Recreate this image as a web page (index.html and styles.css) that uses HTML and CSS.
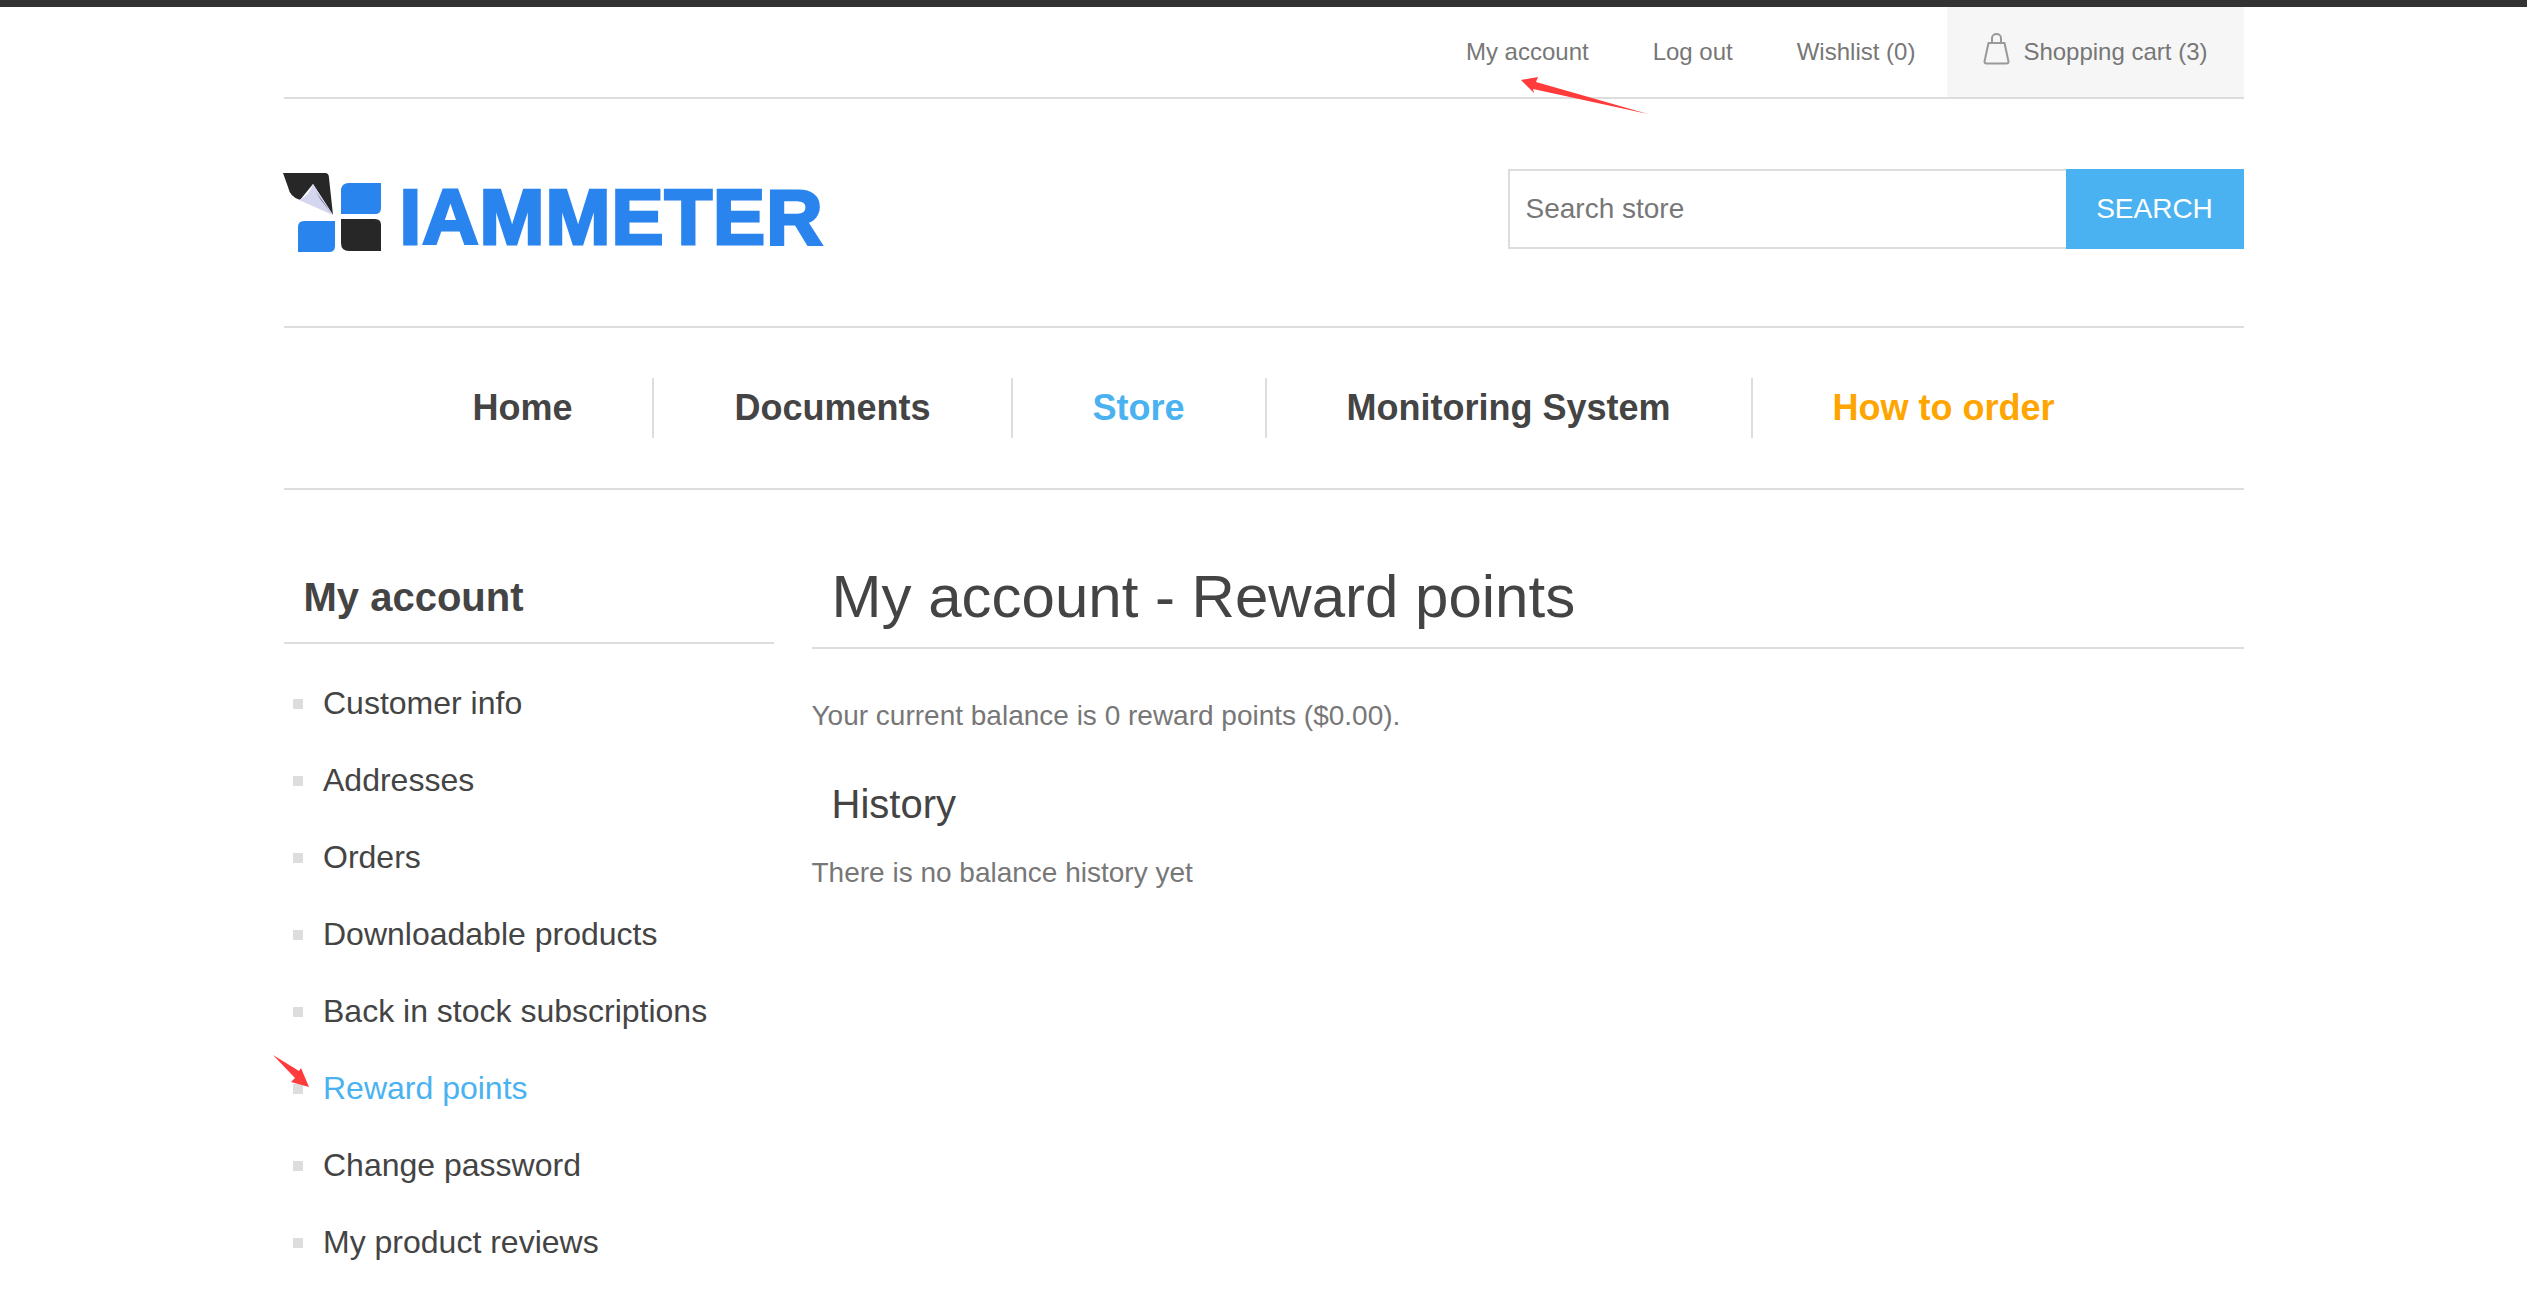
FILE: index.html
```
<!DOCTYPE html>
<html lang="en">
<head>
<meta charset="utf-8">
<title>My account - Reward points</title>
<link rel="stylesheet" href="styles.css">
</head>
<body>
<div class="page">
  <header class="top-links">
    <a class="top-link" href="#">My account</a>
    <a class="top-link" href="#">Log out</a>
    <a class="top-link" href="#">Wishlist (0)</a>
    <a class="cart" href="#">
      <svg class="cart-icon" width="27" height="33" viewBox="0 0 27 33"><path d="M5.5 10H21.5L25.5 28.5a2 2 0 0 1-2 2H3.5a2 2 0 0 1-2-2z M9 10V5a4.5 4 0 0 1 9 0v5" fill="none" stroke="#999" stroke-width="2" stroke-linejoin="round"/></svg>
      <span>Shopping cart (3)</span>
    </a>
  </header>
  <div class="brand-row">
    <a class="logo" href="#">
      <svg class="logo-mark" width="98" height="80" viewBox="0 0 98 80">
        <path d="M0 0H42q4 0 4 5L50 42L30 11L17 27Q7 24 5 14z" fill="#272727"/>
        <path d="M30 11L50 42L16 27Q27 22 30 11z" fill="#d4d6f0"/>
        <path d="M33 19L49 41L38 27z" fill="#4b5270"/>
        <path d="M66 10H98V35q0 6-6 6H58V18q0-8 8-8z" fill="#2a84ee"/>
        <path d="M21 48H52V73q0 6-6 6H15V54q0-6 6-6z" fill="#2a84ee"/>
        <path d="M58 46H92q6 0 6 6V78H66q-8 0-8-8z" fill="#272727"/>
      </svg>
      <span class="logo-text">IAMMETER</span>
    </a>
    <form class="search">
      <input class="search-input" type="text" placeholder="Search store">
      <button class="search-btn" type="button">SEARCH</button>
    </form>
  </div>
  <nav class="menu">
    <a class="menu-item" href="#">Home</a>
    <a class="menu-item" href="#">Documents</a>
    <a class="menu-item menu-blue" href="#">Store</a>
    <a class="menu-item" href="#">Monitoring System</a>
    <a class="menu-item menu-orange" href="#">How to order</a>
  </nav>
  <div class="columns">
    <aside class="side">
      <h2 class="side-title">My account</h2>
      <ul class="side-list">
        <li><a href="#">Customer info</a></li>
        <li><a href="#">Addresses</a></li>
        <li><a href="#">Orders</a></li>
        <li><a href="#">Downloadable products</a></li>
        <li><a href="#">Back in stock subscriptions</a></li>
        <li><a class="active" href="#">Reward points</a></li>
        <li><a href="#">Change password</a></li>
        <li><a href="#">My product reviews</a></li>
      </ul>
    </aside>
    <main class="main">
      <h1 class="page-title">My account - Reward points</h1>
      <p class="balance">Your current balance is 0 reward points ($0.00).</p>
      <h2 class="history">History</h2>
      <p class="no-history">There is no balance history yet</p>
    </main>
  </div>
</div>
<svg class="arrows" width="2527" height="1311" viewBox="0 0 2527 1311">
  <path d="M1521 80L1538 77L1536 82L1648 114L1533 89L1534 93z" fill="#ff3b3b"/>
  <path d="M273 1055L299 1071L301 1068L309 1087L291 1082L295 1078z" fill="#ff3b3b"/>
</svg>
</body>
</html>
```
FILE: styles.css
```
* { box-sizing: border-box; }
html, body { margin: 0; padding: 0; }
body {
  border-top: 7px solid #333;
  background: #fff;
  font-family: "Liberation Sans", Arial, sans-serif;
  color: #444;
  position: relative;
}
a { text-decoration: none; color: inherit; }
.page { width: 1960px; margin: 0 auto; }

.top-links {
  display: flex;
  justify-content: flex-end;
  align-items: stretch;
  height: 92px;
  border-bottom: 2px solid #ddd;
  font-size: 24px;
  color: #777;
}
.top-link { display: flex; align-items: center; padding: 0 32px; }
.cart {
  display: flex;
  align-items: center;
  gap: 13px;
  padding: 0 36px;
  background: #f6f6f6;
}
.cart-icon { margin-top: -6px; }

.brand-row {
  display: flex;
  justify-content: space-between;
  align-items: flex-start;
  height: 229px;
  border-bottom: 2px solid #ddd;
}
.logo { display: flex; align-items: flex-start; margin-top: 74px; }
.logo-mark { display: block; margin-right: 19px; margin-left: -1px; }
.logo-text {
  font-size: 78px;
  font-weight: 700;
  line-height: 78px;
  letter-spacing: 1px;
  color: #2a84ee;
  -webkit-text-stroke: 3px #2a84ee;
  margin-top: 5px;
}
.search { display: flex; margin-top: 70px; height: 80px; }
.search-input {
  width: 558px;
  height: 80px;
  border: 2px solid #ddd;
  border-right: 0;
  padding: 0 16px;
  font: 28px "Liberation Sans", Arial, sans-serif;
  color: #777;
  outline: none;
}
.search-input::placeholder { color: #777; opacity: 1; }
.search-btn {
  width: 178px;
  height: 80px;
  border: 0;
  background: #4ab2f1;
  color: #fff;
  font: 28px "Liberation Sans", Arial, sans-serif;
}

.menu {
  display: flex;
  justify-content: center;
  align-items: center;
  height: 162px;
  border-bottom: 2px solid #ddd;
}
.menu-item {
  display: flex;
  align-items: center;
  height: 60px;
  padding: 0 80px;
  font-size: 36px;
  font-weight: 700;
  color: #444;
  border-right: 2px solid #ddd;
}
.menu-item:last-child { border-right: 0; }
.menu-blue { color: #4ab2f1; }
.menu-orange { color: #ffa500; }

.columns { display: flex; gap: 38px; padding-top: 65px; padding-bottom: 48px; }
.side { width: 490px; flex: none; }
.side-title {
  margin: 0;
  height: 89px;
  padding: 0 20px;
  border-bottom: 2px solid #ddd;
  font-size: 40px;
  line-height: 84px;
  font-weight: 700;
  color: #444;
}
.side-list { list-style: none; margin: 0; padding: 21px 0 0; }
.side-list li {
  position: relative;
  height: 77px;
  line-height: 77px;
  padding-left: 39.5px;
  font-size: 32px;
  color: #444;
}
.side-list li::before {
  content: "";
  position: absolute;
  left: 9px;
  top: 34px;
  width: 10px;
  height: 10px;
  background: #ddd;
}
.active { color: #4ab2f1; }

.main { flex: 1; }
.page-title {
  margin: 0 0 49px;
  height: 94px;
  padding: 0 20px;
  border-bottom: 2px solid #ddd;
  font-size: 60px;
  line-height: 84px;
  font-weight: 400;
  color: #444;
}
.balance { margin: 0; font-size: 28px; line-height: 36px; color: #777; }
.history {
  margin: 46px 0 0;
  padding: 0 20px;
  font-size: 40px;
  line-height: 48px;
  font-weight: 400;
  color: #444;
}
.no-history { margin: 27px 0 0; font-size: 28px; line-height: 36px; color: #777; }

.arrows { position: absolute; left: 0; top: -7px; pointer-events: none; }
```
